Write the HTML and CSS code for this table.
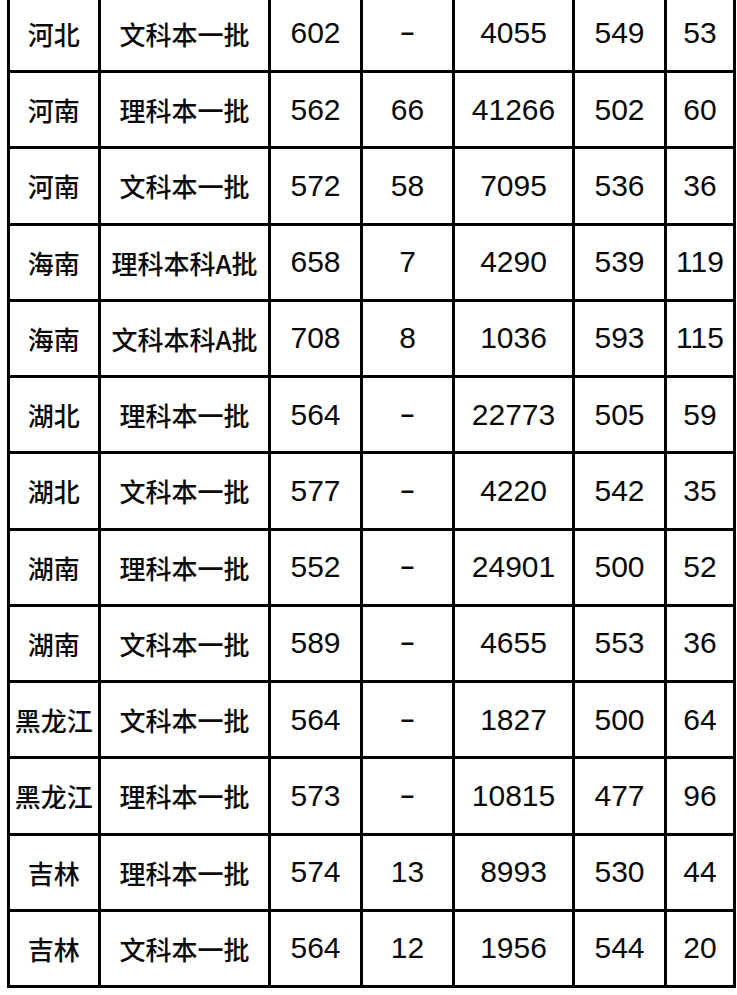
FILE: index.html
```html
<!DOCTYPE html>
<html lang="zh-CN">
<head>
<meta charset="utf-8">
<title>分数线</title>
<link rel="stylesheet" href="styles.css">
</head>
<body>
<div class="wrap">
<table class="scores">
  <colgroup>
    <col class="c1"><col class="c2"><col class="c3"><col class="c4"><col class="c5"><col class="c6"><col class="c7">
  </colgroup>
  <tbody>
    <tr><td class="zh">河北</td><td class="zh">文科本一批</td><td>602</td><td><span class="dash">–</span></td><td>4055</td><td>549</td><td>53</td></tr>
    <tr><td class="zh">河南</td><td class="zh">理科本一批</td><td>562</td><td>66</td><td>41266</td><td>502</td><td>60</td></tr>
    <tr><td class="zh">河南</td><td class="zh">文科本一批</td><td>572</td><td>58</td><td>7095</td><td>536</td><td>36</td></tr>
    <tr><td class="zh">海南</td><td class="zh">理科本科A批</td><td>658</td><td>7</td><td>4290</td><td>539</td><td>119</td></tr>
    <tr><td class="zh">海南</td><td class="zh">文科本科A批</td><td>708</td><td>8</td><td>1036</td><td>593</td><td>115</td></tr>
    <tr><td class="zh">湖北</td><td class="zh">理科本一批</td><td>564</td><td><span class="dash">–</span></td><td>22773</td><td>505</td><td>59</td></tr>
    <tr><td class="zh">湖北</td><td class="zh">文科本一批</td><td>577</td><td><span class="dash">–</span></td><td>4220</td><td>542</td><td>35</td></tr>
    <tr><td class="zh">湖南</td><td class="zh">理科本一批</td><td>552</td><td><span class="dash">–</span></td><td>24901</td><td>500</td><td>52</td></tr>
    <tr><td class="zh">湖南</td><td class="zh">文科本一批</td><td>589</td><td><span class="dash">–</span></td><td>4655</td><td>553</td><td>36</td></tr>
    <tr><td class="zh">黑龙江</td><td class="zh">文科本一批</td><td>564</td><td><span class="dash">–</span></td><td>1827</td><td>500</td><td>64</td></tr>
    <tr><td class="zh">黑龙江</td><td class="zh">理科本一批</td><td>573</td><td><span class="dash">–</span></td><td>10815</td><td>477</td><td>96</td></tr>
    <tr><td class="zh">吉林</td><td class="zh">理科本一批</td><td>574</td><td>13</td><td>8993</td><td>530</td><td>44</td></tr>
    <tr><td class="zh">吉林</td><td class="zh">文科本一批</td><td>564</td><td>12</td><td>1956</td><td>544</td><td>20</td></tr>
  </tbody>
</table>
</div>
</body>
</html>
```
FILE: styles.css
```css
html, body {
  margin: 0;
  padding: 0;
  background: #ffffff;
}
.wrap {
  padding-left: 6.5px;
  margin-top: -6.25px;
}
.scores {
  border-collapse: collapse;
  table-layout: fixed;
  width: 729.5px;
  border: 3px solid #000;
  font-family: "Liberation Sans", Arial, sans-serif;
  font-size: 30px;
  color: #0a0a0a;
}
.c1 { width: 91.5px; }
.c2 { width: 170px; }
.c3 { width: 92px; }
.c4 { width: 92px; }
.c5 { width: 120px; }
.c6 { width: 92px; }
.c7 { width: 69px; }
.scores tr {
  height: 76.25px;
}
.scores td {
  border: 3px solid #000;
  padding: 0;
  text-align: center;
  vertical-align: middle;
  white-space: nowrap;
  overflow: hidden;
}
.scores td.zh {
  font-family: "Noto Sans CJK SC", "Noto Sans", sans-serif;
  font-size: 26px;
  font-weight: 500;
}
.dash {
  display: inline-block;
  font-size: 24px;
  font-weight: 700;
  position: relative;
  top: -3px;
}
```
